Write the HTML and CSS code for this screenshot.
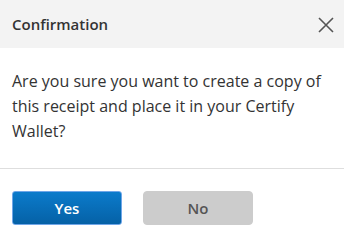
FILE: index.html
```html
<!DOCTYPE html>
<html>
<head>
<meta charset="utf-8">
<link rel="stylesheet" href="styles.css">
</head>
<body>
<div class="dialog">
  <div class="header">
    <span class="title">Confirmation</span>
    <svg class="close" width="16" height="16" viewBox="0 0 16 16"><path d="M1 1L15 15M15 1L1 15" stroke="#555" stroke-width="1.6" fill="none"/></svg>
  </div>
  <div class="body">Are you sure you want to create a copy of this receipt and place it in your Certify Wallet?</div>
  <div class="footer">
    <button class="btn yes">Yes</button>
    <button class="btn no">No</button>
  </div>
</div>
</body>
</html>
```
FILE: styles.css
```css
html, body { margin: 0; padding: 0; background: #fff; }
body { font-family: "Open Sans", sans-serif; color: #333; }
.dialog { width: 344px; }
.header {
  height: 48px;
  background: #f3f3f3;
  display: flex;
  align-items: center;
  justify-content: space-between;
  padding: 0 10px 0 12px;
  box-sizing: border-box;
}
.title { font-size: 15px; font-weight: 600; color: #333; }
.close { display: block; margin-top: 1px; }
.body {
  padding: 21px 12px 24px 12px;
  font-size: 16px;
  line-height: 25px;
  color: #333;
}
.footer {
  border-top: 1px solid #dedede;
  padding: 22px 12px 18px;
  display: flex;
  gap: 21px;
}
.btn {
  width: 110px;
  height: 34px;
  font-family: "Open Sans", sans-serif;
  font-size: 15px;
  font-weight: 600;
  border-radius: 3px;
  padding: 0;
}
.yes {
  background: linear-gradient(#0b7bcb, #0561a6);
  border: 1px solid #6fa6e8;
  color: #fff;
}
.no {
  background: #cccccc;
  border: 1px solid #cccccc;
  color: #555;
  border-radius: 4px;
}
```
